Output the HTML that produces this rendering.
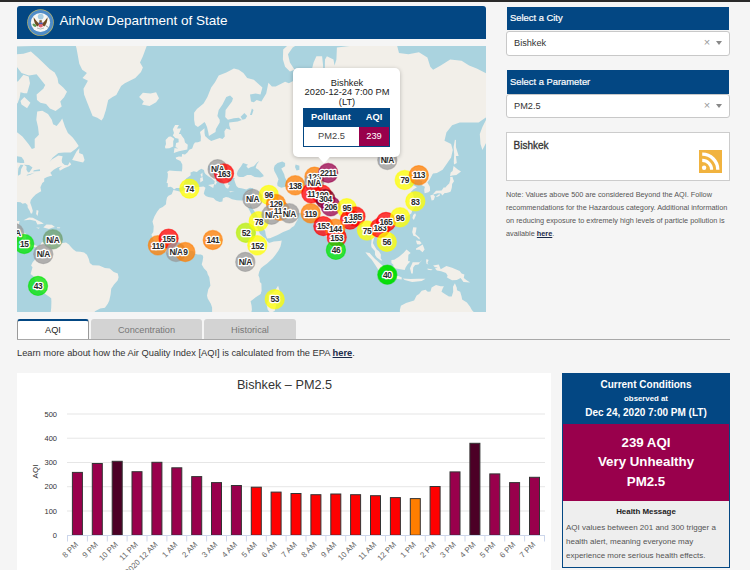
<!DOCTYPE html>
<html><head><meta charset="utf-8">
<style>
*{box-sizing:border-box;margin:0;padding:0}
html,body{width:750px;height:570px;overflow:hidden;background:#f5f5f5;font-family:"Liberation Sans",sans-serif;position:relative}
.abs{position:absolute}
#topbar{left:0;top:0;width:750px;height:2px;background:#2a2a2a}
#hdr{left:17px;top:6px;width:469px;height:33px;background:#034783;border-radius:3px 3px 0 0}
#hdr .t{position:absolute;left:42.5px;top:6.5px;font-size:13.5px;color:#fff;white-space:nowrap}
#map{left:17px;top:46px;width:469px;height:266px;background:#aad3df;overflow:hidden}
.sh{background:#034783;color:#fff;font-size:9.4px;-webkit-text-stroke:0.2px #fff;padding:0 0 0 3px;white-space:nowrap}
.sel{background:#fff;border:1px solid #c8c8c8;border-radius:3px;font-size:9.2px;color:#333;white-space:nowrap}
.note{font-size:7.3px;color:#555;line-height:13.1px;white-space:nowrap}
.tl{top:325px;font-size:9.2px;color:#777;text-align:center;white-space:nowrap}
.tabx{top:319px;height:21px;border:1px solid #c6c6c6;border-bottom:none;background:#d3d3d3;color:#777;font-size:9.5px;text-align:center;line-height:20px;border-radius:3px 3px 0 0}
.ml{font-family:"Liberation Sans",sans-serif;font-size:8.4px;letter-spacing:-0.4px;font-weight:bold;fill:#2a2a2a;text-anchor:middle;paint-order:stroke;stroke:#fff;stroke-width:2.6px;stroke-linejoin:round}
</style></head><body>
<div id="topbar" class="abs"></div>
<div id="hdr" class="abs">
  <svg class="abs" style="left:10px;top:3px" width="27" height="27" viewBox="0 0 27 27">
    <circle cx="13.5" cy="13.5" r="13.3" fill="#b9b56e"/>
    <circle cx="13.5" cy="13.5" r="12.6" fill="#4f8cc8"/>
    <circle cx="13.5" cy="13.5" r="9.6" fill="#f7f7f4"/>
    <circle cx="13.7" cy="7.6" r="2.9" fill="#a8cde2"/>
    <path d="M12.8 15.5 Q9.5 12.5 6.6 8.2 Q6.8 14 10.2 17.6 Z" fill="#6e4b22"/>
    <path d="M14.4 15.5 Q17.7 12.5 20.6 8.2 Q20.4 14 17.2 17.6 Z" fill="#6e4b22"/>
    <rect x="12.4" y="11.2" width="2.4" height="2.6" fill="#7a5a30"/>
    <path d="M11.8 13.6 H15.6 V17.2 Q13.7 19.6 11.8 17.2 Z" fill="#e06070"/>
    <rect x="11.8" y="13.6" width="3.8" height="1.5" fill="#3d5db0"/>
    <ellipse cx="7.4" cy="16.2" rx="2.2" ry="1.3" fill="#5d9a55" transform="rotate(35 7.4 16.2)"/>
    <path d="M18.5 16.5 L21.5 18.5" stroke="#9a9a9a" stroke-width="1"/>
    <path d="M10 19 Q13.5 21 17 19" stroke="#aaa" stroke-width="0.8" fill="none"/>
  </svg>
  <div class="t">AirNow Department of State</div>
</div>
<div id="map" class="abs"></div>
<!--MAP-->
<svg class="abs" style="left:17px;top:46px" width="469" height="266" viewBox="17 46 469 266">
<rect x="17" y="46" width="469" height="266" fill="#aad3df"/>
<defs><filter id="bl" x="0" y="0" width="1" height="1"><feGaussianBlur stdDeviation="0.4"/></filter></defs><g filter="url(#bl)"><rect x="17" y="46" width="469" height="266" fill="#aad3df"/><g fill="#f2efe9">
<polygon points="-5.1,224.2 -5.1,130.6 9.1,129.9 15.8,131.3 22.4,136.4 28.5,143.9 31.9,149.1 34.7,147.9 34.7,139.1 38.9,134.8 38.0,127.1 36.3,119.7 37.2,111.5 42.3,110.7 48.0,113.9 51.8,119.7 53.1,124.2 56.6,126.0 60.3,121.6 62.2,118.6 65.1,127.1 67.9,133.1 72.7,137.4 75.9,141.7 78.7,146.1 75.9,148.8 70.8,152.4 64.1,152.4 58.4,153.0 52.8,157.4 49.5,161.9 51.8,159.4 58.4,155.4 62.6,156.2 61.7,160.2 62.1,162.7 64.7,164.9 67.9,165.2 69.8,161.9 71.2,164.4 68.9,166.3 64.1,168.2 59.8,170.8 59.0,168.2 62.2,166.0 57.5,167.6 53.7,169.8 50.5,172.4 50.7,173.4 51.8,174.9 52.0,175.7 49.5,176.2 47.1,177.0 44.2,178.5 44.2,181.5 42.3,182.9 41.4,184.9 40.4,187.2 41.2,191.2 38.9,192.6 35.7,194.5 33.0,197.2 30.8,199.9 30.2,202.8 31.7,206.9 32.8,210.7 32.1,213.5 30.8,213.5 29.4,210.3 27.7,207.5 27.5,204.9 25.3,203.0 22.6,203.8 20.5,202.3 17.7,201.9 14.8,202.8 15.4,205.2 12.9,204.9 8.2,203.8 4.4,204.7 0.0,208.0 -0.4,212.8 -0.7,220.1 0.6,223.2 2.5,226.2 5.3,227.8 10.1,227.0 12.4,225.6 13.1,222.1 16.7,221.1 19.6,221.1 18.6,225.2 18.0,227.8 17.1,231.7 21.5,232.3 25.3,233.1 26.6,235.1 25.8,240.9 27.1,243.8 30.0,245.9 33.8,244.6 37.8,246.3 40.4,245.0 41.4,242.7 43.8,241.5 47.1,240.4 48.4,239.2 49.5,240.4 48.4,241.9 49.9,244.8 50.9,241.9 51.8,240.9 55.0,242.7 58.4,242.7 62.8,243.1 66.0,242.5 68.9,244.4 70.8,246.7 73.1,249.2 76.1,251.5 80.3,251.7 84.1,252.4 86.9,254.7 88.8,259.1 89.8,262.9 92.6,265.2 99.2,265.6 104.9,268.0 109.7,268.6 113.8,272.0 117.8,273.4 118.6,277.2 117.6,280.6 114.0,284.5 111.2,288.8 110.6,294.6 109.3,300.6 107.8,303.7 104.9,307.8 100.2,308.4 95.4,311.1 92.4,314.0 50.5,314.0 51.2,307.8 51.4,301.6 51.2,298.2 49.2,296.8 44.2,293.3 39.9,289.3 38.2,285.8 35.7,281.0 33.4,276.2 30.6,273.9 31.9,269.5 32.5,267.3 31.1,265.4 32.8,262.0 34.7,260.1 35.7,258.2 38.0,255.3 38.0,250.5 36.3,247.7 33.8,246.7 31.9,248.6 29.6,247.3 26.2,246.7 22.4,243.8 21.5,240.9 18.6,238.0 14.8,237.0 11.0,236.1 7.2,232.5 4.4,231.7 0.6,232.5 -5.1,230.2"/>
<polygon points="-5.1,127.1 5.3,123.5 8.2,115.9 12.0,108.6 17.7,103.1 19.6,97.8 20.5,92.2 24.3,93.2 27.1,93.2 30.0,83.3 28.7,76.5 23.4,74.8 17.7,81.8 13.9,78.1 10.1,72.6 4.4,65.6 -5.1,68.6"/>
<polygon points="16.7,54.3 23.4,53.7 30.9,51.6 38.5,58.2 44.2,63.8 49.9,69.2 54.7,72.6 57.5,78.1 58.4,83.3 63.2,87.4 67.0,91.7 64.1,97.3 60.3,101.4 61.7,106.5 55.6,111.1 49.9,108.6 46.1,104.0 40.4,102.7 37.0,100.0 36.6,94.6 43.3,88.8 45.2,84.9 40.4,79.1 36.6,74.3 29.0,75.4 21.5,73.1 15.8,65.6"/>
<polygon points="4.4,46.8 32.8,46.1 32.8,34.9 4.4,34.9"/>
<polygon points="20.5,100.9 24.3,96.9 30.4,102.7 27.1,108.2 21.5,104.4"/>
<polygon points="72.1,160.0 76.5,151.6 79.3,148.2 79.1,153.0 82.9,154.5 84.6,160.0 83.1,162.5 78.6,161.6 72.3,160.0"/>
<polygon points="46.1,18.0 59.4,34.9 73.6,38.8 76.5,48.2 79.3,63.8 82.2,69.7 86.9,73.1 82.5,78.1 87.9,80.7 83.5,88.8 84.1,94.6 87.3,102.7 89.8,109.1 92.6,115.9 97.3,117.8 101.5,120.5 103.4,117.8 105.9,109.9 108.2,100.0 112.5,96.9 116.3,95.0 121.1,85.9 124.8,83.3 135.3,78.1 141.0,72.0 142.9,67.4 140.0,62.6 142.9,56.3 146.7,46.1 150.5,30.9 150.5,-1.9 46.1,-1.9"/>
<polygon points="139.1,96.9 142.9,92.7 150.5,93.6 156.1,92.2 159.0,98.2 156.1,102.3 149.5,106.1 141.9,104.4 143.8,101.4"/>
<polygon points="23.5,220.3 29.0,217.6 32.8,217.8 38.0,220.5 41.2,222.1 43.8,223.8 37.4,224.4 35.7,221.1 30.0,219.7 25.3,220.3"/>
<polygon points="43.5,227.2 46.5,224.4 51.8,224.8 55.0,227.0 52.0,227.8 49.0,229.0 43.5,227.6"/>
<polygon points="36.1,227.4 39.9,227.8 38.5,228.8"/>
<polygon points="57.1,227.2 60.2,227.4 60.0,228.2 57.1,228.2"/>
<polygon points="36.6,210.1 38.5,210.7 37.6,216.0 36.1,213.9"/>
<polygon points="173.8,153.0 178.9,151.3 187.3,149.5 187.8,144.8 185.0,142.6 184.2,139.1 181.8,135.8 180.8,134.1 178.9,134.1 181.2,128.5 177.0,128.5 178.9,124.9 175.1,124.9 172.8,129.2 174.0,133.1 172.8,135.4 175.3,138.1 178.5,138.8 178.7,142.3 176.1,142.9 175.5,147.0 178.3,148.5 175.5,148.2 174.5,147.9"/>
<polygon points="165.6,148.5 169.4,148.2 173.2,146.4 173.2,141.3 174.2,138.8 170.9,136.4 168.7,136.8 165.6,140.1 166.0,143.9 164.9,147.0"/>
<polygon points="174.0,189.6 172.6,187.7 170.6,186.8 167.7,187.2 167.9,183.2 166.6,182.9 167.7,177.5 167.9,173.7 167.1,171.9 169.4,170.5 175.1,171.1 180.8,171.3 181.8,171.6 182.3,168.2 182.3,164.4 180.4,161.1 176.1,159.1 175.7,157.4 178.9,156.5 181.8,156.8 182.1,153.9 185.0,154.5 187.4,152.4 189.3,149.8 192.2,148.5 193.7,144.2 195.0,142.6 197.9,142.3 200.7,141.3 200.9,136.4 200.0,132.0 204.5,128.2 204.5,133.1 205.1,136.1 208.3,139.1 211.2,141.0 219.7,138.1 222.5,139.1 224.8,136.4 224.4,131.3 226.3,128.5 230.7,129.9 229.2,125.3 229.2,122.4 237.7,121.6 241.9,120.1 238.7,117.8 233.9,118.2 227.9,119.7 225.2,117.1 225.6,109.9 232.0,101.4 233.0,98.2 230.1,95.5 226.3,96.9 222.5,104.4 218.7,109.9 217.4,115.9 219.7,119.7 219.7,122.4 215.9,128.9 215.5,132.0 212.1,134.1 208.9,136.1 208.3,132.4 207.0,127.1 205.5,123.5 204.5,122.0 201.7,124.2 197.9,127.1 195.0,124.9 194.1,119.7 194.1,112.7 196.9,109.1 203.6,103.6 207.4,96.9 211.2,87.4 215.0,82.3 218.7,75.4 226.3,72.6 233.9,68.6 238.7,69.7 243.4,73.1 247.2,78.1 253.8,79.7 262.4,87.4 260.5,94.6 255.7,93.6 250.0,94.6 251.0,101.4 253.8,102.3 256.7,100.0 261.4,101.4 266.2,93.6 268.4,82.8 271.9,86.4 275.7,86.4 285.1,81.8 288.9,83.3 294.6,80.2 298.4,80.7 299.4,75.4 309.8,77.0 314.5,83.3 311.3,71.5 313.6,62.6 316.4,56.3 322.1,56.3 323.1,65.6 323.5,74.3 324.6,74.3 325.0,59.5 326.9,56.3 333.5,59.5 334.5,65.6 336.4,59.5 336.9,47.5 349.6,46.1 359.1,38.8 374.3,26.8 383.8,22.5 393.3,30.9 399.0,53.0 408.4,54.3 418.9,52.3 427.4,57.6 430.3,66.8 433.1,69.7 440.7,65.6 450.2,59.5 461.6,60.7 469.1,65.6 476.7,68.6 488.1,74.3 497.6,75.4 497.6,119.7 493.8,130.6 488.1,139.1 482.4,150.1 480.5,143.9 479.8,134.1 482.4,127.1 488.1,115.9 478.6,122.4 471.0,122.4 459.7,122.4 452.1,125.3 446.4,132.4 444.5,140.7 451.1,143.9 452.8,150.1 451.1,157.4 447.3,163.0 442.6,169.8 436.9,172.9 433.1,173.4 432.5,174.2 430.6,178.0 427.4,182.4 429.9,186.8 430.1,190.8 428.4,192.2 424.6,193.3 424.2,189.6 424.9,186.8 421.7,185.3 422.3,181.2 420.2,180.2 416.0,178.7 414.1,182.4 410.3,181.7 408.4,181.9 407.9,183.6 410.2,186.1 410.7,187.0 413.8,185.3 417.0,187.2 413.2,189.6 410.9,191.9 412.8,193.6 413.9,197.4 415.8,200.5 415.8,203.2 415.1,206.5 412.2,210.7 411.3,213.5 408.4,215.4 405.6,218.0 401.2,219.5 399.9,219.7 395.2,221.1 393.3,222.1 392.9,221.1 389.5,220.9 387.0,223.2 385.3,226.2 387.0,229.6 391.0,233.5 391.9,238.0 391.8,240.5 388.5,242.9 386.6,244.8 383.8,246.5 383.4,243.4 380.9,242.7 379.0,239.6 376.0,237.0 374.3,237.2 372.8,242.9 374.9,246.7 376.8,249.8 379.0,251.3 380.9,254.4 380.7,258.2 382.3,260.4 380.9,260.4 376.8,257.6 375.1,254.9 374.9,250.9 371.5,247.3 371.1,244.8 371.6,240.0 369.9,231.2 369.0,230.4 365.8,232.5 363.5,232.1 363.3,227.2 362.0,225.2 359.7,222.7 358.7,219.5 356.3,218.7 352.9,220.7 349.6,221.3 349.3,223.6 345.8,225.4 340.7,230.2 336.7,233.1 336.9,237.4 336.2,243.3 333.7,245.4 331.6,247.5 329.7,245.9 328.2,241.3 326.5,238.2 324.8,232.9 322.7,226.2 322.9,223.2 322.3,221.3 318.3,222.5 315.5,219.5 318.0,218.2 314.5,216.8 311.3,214.3 306.0,213.3 301.3,213.5 294.6,212.4 293.3,209.7 291.4,209.2 288.4,210.7 284.2,208.4 281.0,205.4 279.4,202.8 276.6,203.2 275.7,204.7 277.6,208.2 279.8,211.8 281.0,214.3 282.5,215.6 287.0,215.6 289.9,213.3 291.4,211.4 291.6,214.3 293.1,216.2 295.8,216.8 298.0,219.1 295.6,223.2 294.1,226.0 292.0,227.2 289.5,229.6 283.2,232.1 277.6,234.9 270.0,238.2 267.1,238.6 265.8,235.1 265.2,231.2 262.4,226.2 259.0,221.1 257.6,216.2 255.4,212.8 251.9,207.5 250.6,204.3 249.7,207.7 248.1,206.9 246.4,203.4 249.7,200.3 251.0,196.5 252.5,191.9 253.3,188.2 250.0,187.7 246.3,189.4 242.5,188.4 238.3,187.7 236.4,186.1 234.9,181.9 234.1,179.2 234.9,178.0 231.1,177.7 229.2,179.2 227.5,179.5 228.2,182.4 227.9,184.4 229.7,185.3 228.2,188.4 227.3,188.4 225.8,187.5 224.6,184.9 222.9,181.2 221.4,178.7 221.6,175.5 219.7,173.7 215.9,171.1 213.4,169.0 210.6,166.8 210.4,165.2 207.9,166.3 208.1,169.0 210.4,171.1 211.7,173.9 215.0,176.2 218.4,177.7 219.7,179.7 216.8,178.7 215.9,181.0 217.0,182.4 215.1,185.1 214.2,184.1 214.8,181.2 212.9,179.5 211.2,178.0 208.3,176.2 205.5,173.9 204.5,172.4 203.9,170.0 201.3,168.7 198.8,170.3 196.9,172.1 193.7,171.3 190.5,172.4 190.7,175.2 188.4,177.0 186.1,178.5 184.6,181.2 184.0,183.6 183.1,185.8 180.4,188.0 176.3,188.0"/>
<polygon points="289.9,71.5 294.6,69.7 289.9,62.6 288.0,54.3 292.7,47.5 298.4,44.0 290.8,42.5 283.2,49.6 282.9,59.5 285.1,66.8"/>
<polygon points="336.0,244.2 338.6,246.7 340.0,249.0 338.8,251.1 336.5,251.5 335.8,248.6"/>
<polygon points="415.1,213.3 416.0,214.9 413.8,220.1 412.4,218.0 413.2,214.9"/>
<polygon points="390.6,225.8 394.2,224.0 395.2,225.0 394.2,227.2 392.3,227.8 390.6,227.2"/>
<polygon points="432.9,194.2 436.0,190.8 441.6,190.5 443.9,187.2 445.1,187.7 447.3,185.3 449.2,183.6 450.2,180.0 450.2,177.0 452.5,176.7 453.0,178.7 454.0,181.2 452.1,184.1 451.9,187.2 451.3,189.6 450.7,191.5 449.8,191.9 448.3,192.6 446.4,192.9 444.5,192.9 444.3,193.6 442.2,195.4 441.1,193.6 437.8,193.3 436.0,193.8 433.1,194.5"/>
<polygon points="430.3,195.4 433.1,194.5 435.0,196.5 433.7,200.1 431.6,200.5 430.8,197.2"/>
<polygon points="436.0,196.5 439.7,193.8 439.7,195.8 436.9,197.0"/>
<polygon points="450.2,176.2 452.1,175.5 456.4,174.9 461.0,171.6 457.8,169.5 453.6,166.0 452.6,171.1 450.7,172.4 450.2,174.9"/>
<polygon points="454.0,164.4 456.8,163.0 455.9,156.0 458.7,156.0 455.9,147.0 455.9,140.1 454.9,139.7 453.6,147.0 454.2,154.5 453.8,161.6"/>
<polygon points="413.2,227.2 416.6,227.4 416.0,231.2 415.3,234.1 419.8,238.0 419.4,239.4 416.0,236.5 413.4,235.7 412.2,232.1 412.8,229.2"/>
<polygon points="416.0,248.6 422.7,244.4 424.6,249.6 422.5,252.3 419.6,249.8 416.0,249.8"/>
<polygon points="416.0,240.4 419.8,240.9 421.7,243.3 419.8,244.6 417.0,244.2"/>
<polygon points="391.4,260.1 394.2,259.7 399.0,256.8 403.7,252.8 406.5,249.6 410.7,253.0 408.4,254.7 408.1,261.0 410.3,261.4 407.5,264.4 405.6,267.6 404.7,270.1 401.8,269.5 396.1,268.6 393.6,268.4 393.3,264.8 391.4,262.9"/>
<polygon points="365.4,252.3 369.6,253.0 374.3,258.2 381.3,264.6 385.7,268.6 385.3,273.9 382.8,274.1 378.7,270.5 375.1,264.8 371.8,259.7 368.2,255.9"/>
<polygon points="384.2,275.8 386.6,274.3 390.0,274.7 394.2,276.0 398.4,276.0 401.8,277.6 401.6,279.5 395.2,278.5 389.5,277.7 384.7,276.2"/>
<polygon points="411.3,273.4 412.8,273.4 413.2,267.6 415.1,265.0 418.5,264.6 421.7,260.1 420.8,262.0 412.6,262.3 412.1,263.8 410.0,268.2"/>
<polygon points="402.8,278.5 410.3,279.1 417.9,278.7 425.5,278.7 421.7,281.0 412.2,282.0 404.7,279.9"/>
<polygon points="433.1,265.4 438.8,264.6 440.7,269.2 446.4,265.9 452.1,267.8 459.7,270.9 461.6,273.4 464.4,274.5 463.8,278.1 466.3,280.0 470.1,282.5 463.5,282.0 460.6,278.1 456.8,280.0 452.1,280.2 448.3,278.3 446.8,277.2 447.7,275.8 446.0,273.0 441.1,271.3 436.9,270.5 435.0,268.4 437.8,267.3 435.0,267.3"/>
<polygon points="426.5,259.1 428.6,260.1 427.4,262.9 428.4,264.4 426.5,263.8 426.1,261.0"/>
<polygon points="427.4,268.6 432.7,269.5 431.2,270.3 427.8,269.7"/>
<polygon points="399.9,309.8 400.9,305.7 406.0,302.9 414.1,300.6 416.6,295.6 419.1,294.1 421.7,290.7 425.5,289.7 427.8,291.7 430.5,291.5 431.6,287.4 436.0,284.9 440.7,286.2 443.9,286.2 442.6,288.8 441.5,291.7 444.5,293.7 448.9,296.6 451.7,296.4 453.2,291.7 453.0,286.8 454.9,283.3 456.8,287.8 457.0,290.3 460.2,291.7 461.6,296.6 462.1,299.6 466.9,302.6 470.1,306.7 472.0,310.2 474.8,313.0 475.2,322.6 399.9,322.6"/>
<polygon points="173.4,190.1 180.8,191.7 186.5,188.4 190.3,187.7 196.9,187.2 203.6,186.5 205.5,187.7 204.5,190.8 203.8,193.8 205.7,196.1 208.3,197.0 213.4,198.1 215.9,200.5 219.7,202.1 222.4,201.4 222.9,198.3 226.0,197.0 228.6,197.6 232.0,199.2 236.8,200.3 241.3,200.5 245.9,200.3 246.4,203.4 248.1,207.5 250.6,212.8 252.3,216.2 254.6,220.1 255.2,225.0 257.6,228.2 259.9,233.7 263.3,236.9 266.0,238.8 266.7,240.5 269.0,243.1 273.8,241.5 279.4,240.9 281.7,240.4 281.3,243.1 280.4,246.7 278.5,250.5 275.7,254.4 272.8,258.2 267.1,263.5 263.3,266.3 260.9,268.2 259.2,271.8 258.4,275.3 259.5,278.1 259.9,282.0 261.4,283.5 261.6,290.7 260.7,294.1 255.7,297.2 252.9,299.6 250.6,301.2 251.6,305.7 251.9,309.8 251.0,314.0 212.1,314.0 212.1,307.6 210.8,303.7 207.7,298.6 207.0,295.6 208.3,289.3 210.4,285.8 209.8,281.0 209.3,277.2 207.7,274.3 207.0,271.4 203.9,268.2 201.7,264.4 202.6,261.0 203.2,257.2 202.8,255.5 200.9,254.4 197.9,254.5 195.0,253.8 193.1,250.9 189.9,250.7 186.5,251.5 181.4,253.4 178.0,253.2 174.7,253.2 170.2,254.5 167.1,252.8 163.4,250.2 160.9,248.6 159.4,246.5 158.4,244.4 156.5,242.3 154.8,240.9 152.9,239.2 152.5,236.9 151.4,234.7 153.3,232.1 153.7,226.2 152.5,221.5 154.4,216.6 157.1,211.8 159.6,208.6 162.8,207.1 166.0,204.3 166.2,201.2 167.0,197.6 168.5,195.8 171.7,194.2"/>
<polygon points="278.1,285.8 280.2,292.7 278.9,295.6 276.8,302.6 274.7,310.9 270.3,313.0 267.7,309.8 266.7,304.7 268.6,299.6 268.4,294.6 272.4,292.7 274.9,290.7 277.4,286.8"/>
<polygon points="208.1,185.1 214.2,184.1 213.2,188.0"/>
<polygon points="200.3,182.4 203.2,180.5 202.6,177.0 200.2,178.0"/>
<polygon points="200.9,176.5 202.6,176.5 202.4,172.4 200.9,174.2"/>
<polygon points="229.2,191.2 234.5,191.5 230.1,192.2"/>
<polygon points="245.9,192.9 250.2,190.3 248.7,192.4"/>
</g><g fill="#aad3df">
<polygon points="236.8,173.7 237.7,171.1 239.0,169.0 241.1,166.3 243.0,163.0 245.3,163.8 248.1,164.7 246.3,166.0 248.1,168.4 251.0,167.1 253.8,166.3 257.1,162.5 259.2,161.1 256.7,164.4 255.7,167.9 258.6,169.8 263.3,174.9 263.7,176.2 260.5,177.5 254.8,177.0 251.0,174.9 247.2,174.9 243.4,177.0 239.6,177.0 237.7,176.2"/>
<polygon points="273.8,168.2 274.7,165.5 277.6,163.0 282.3,161.6 285.1,163.0 285.1,166.3 281.3,168.4 284.2,174.2 285.0,177.5 287.0,181.2 286.7,186.5 281.3,187.7 277.6,186.1 277.2,183.4 278.5,179.2 276.6,175.2 274.3,171.1"/>
<polygon points="295.6,164.4 299.4,165.7 299.4,169.8 296.5,170.5 295.0,167.1"/>
<polygon points="381.3,148.5 382.8,147.6 386.6,143.9 391.4,135.1 392.5,135.8 389.5,143.9 383.8,148.5"/>
<polygon points="9.9,162.5 13.9,158.8 17.1,156.2 21.5,157.1 23.9,160.2 24.3,163.0 20.5,163.0 15.8,162.2"/>
<polygon points="18.0,175.7 20.5,174.2 21.1,169.2 23.4,164.9 20.5,164.7 18.4,168.2 18.0,172.4"/>
<polygon points="23.9,164.7 29.0,164.9 32.5,167.6 29.6,171.9 28.1,172.4 26.4,169.8 26.6,166.6"/>
<polygon points="26.6,175.7 30.9,174.4 34.9,172.6 31.9,173.4 27.0,174.7"/>
<polygon points="33.2,171.6 40.0,171.1 39.9,169.2 33.8,170.3"/>
<polygon points="240.6,116.7 244.4,113.1 247.2,115.9 245.3,119.0 242.5,119.7"/>
<polygon points="250.0,115.1 251.9,108.6 253.5,109.9 251.9,115.1"/>
<polygon points="244.9,263.5 249.1,263.5 248.7,267.6 244.9,267.3"/>
</g></g>
<circle cx="14" cy="233" r="9.6" fill="#999999" fill-opacity="0.75" stroke="#999999" stroke-opacity="0.55" stroke-width="1.2"/>
<circle cx="24.2" cy="244" r="9.6" fill="#00e400" fill-opacity="0.75" stroke="#00e400" stroke-opacity="0.55" stroke-width="1.2"/>
<circle cx="52.8" cy="239.3" r="9.6" fill="#6f9f6f" fill-opacity="0.75" stroke="#6f9f6f" stroke-opacity="0.55" stroke-width="1.2"/>
<circle cx="43.3" cy="254.1" r="9.6" fill="#999999" fill-opacity="0.75" stroke="#999999" stroke-opacity="0.55" stroke-width="1.2"/>
<circle cx="38" cy="285.9" r="9.6" fill="#00e400" fill-opacity="0.75" stroke="#00e400" stroke-opacity="0.55" stroke-width="1.2"/>
<circle cx="217.6" cy="169.2" r="9.6" fill="#999999" fill-opacity="0.75" stroke="#999999" stroke-opacity="0.55" stroke-width="1.2"/>
<circle cx="224" cy="173.5" r="9.6" fill="#ff0000" fill-opacity="0.75" stroke="#ff0000" stroke-opacity="0.55" stroke-width="1.2"/>
<circle cx="189.4" cy="188.6" r="9.6" fill="#ffff00" fill-opacity="0.75" stroke="#ffff00" stroke-opacity="0.55" stroke-width="1.2"/>
<circle cx="157.9" cy="245.3" r="9.6" fill="#ff7e00" fill-opacity="0.75" stroke="#ff7e00" stroke-opacity="0.55" stroke-width="1.2"/>
<circle cx="168.6" cy="238.6" r="9.6" fill="#ff0000" fill-opacity="0.75" stroke="#ff0000" stroke-opacity="0.55" stroke-width="1.2"/>
<circle cx="176" cy="252" r="9.6" fill="#999999" fill-opacity="0.75" stroke="#999999" stroke-opacity="0.55" stroke-width="1.2"/>
<circle cx="185.3" cy="252" r="9.6" fill="#ff7e00" fill-opacity="0.75" stroke="#ff7e00" stroke-opacity="0.55" stroke-width="1.2"/>
<circle cx="212.8" cy="240" r="9.6" fill="#ff7e00" fill-opacity="0.75" stroke="#ff7e00" stroke-opacity="0.55" stroke-width="1.2"/>
<circle cx="245.9" cy="232.8" r="9.6" fill="#b8f000" fill-opacity="0.75" stroke="#b8f000" stroke-opacity="0.55" stroke-width="1.2"/>
<circle cx="257.3" cy="245.3" r="9.6" fill="#ffff00" fill-opacity="0.75" stroke="#ffff00" stroke-opacity="0.55" stroke-width="1.2"/>
<circle cx="245.3" cy="261.9" r="9.6" fill="#999999" fill-opacity="0.75" stroke="#999999" stroke-opacity="0.55" stroke-width="1.2"/>
<circle cx="274.7" cy="299.2" r="9.6" fill="#ffff00" fill-opacity="0.75" stroke="#ffff00" stroke-opacity="0.55" stroke-width="1.2"/>
<circle cx="258.7" cy="221.3" r="9.6" fill="#ffff00" fill-opacity="0.75" stroke="#ffff00" stroke-opacity="0.55" stroke-width="1.2"/>
<circle cx="252.5" cy="198.9" r="9.6" fill="#999999" fill-opacity="0.75" stroke="#999999" stroke-opacity="0.55" stroke-width="1.2"/>
<circle cx="268.8" cy="194.9" r="9.6" fill="#ffff00" fill-opacity="0.75" stroke="#ffff00" stroke-opacity="0.55" stroke-width="1.2"/>
<circle cx="276" cy="204" r="9.6" fill="#ff7e00" fill-opacity="0.75" stroke="#ff7e00" stroke-opacity="0.55" stroke-width="1.2"/>
<circle cx="271.5" cy="214.7" r="9.6" fill="#999999" fill-opacity="0.75" stroke="#999999" stroke-opacity="0.55" stroke-width="1.2"/>
<circle cx="280" cy="210.7" r="9.6" fill="#ff7e00" fill-opacity="0.75" stroke="#ff7e00" stroke-opacity="0.55" stroke-width="1.2"/>
<circle cx="289.3" cy="213.3" r="9.6" fill="#999999" fill-opacity="0.75" stroke="#999999" stroke-opacity="0.55" stroke-width="1.2"/>
<circle cx="295.2" cy="185.3" r="9.6" fill="#ff7e00" fill-opacity="0.75" stroke="#ff7e00" stroke-opacity="0.55" stroke-width="1.2"/>
<circle cx="310.7" cy="213.3" r="9.6" fill="#ff7e00" fill-opacity="0.75" stroke="#ff7e00" stroke-opacity="0.55" stroke-width="1.2"/>
<circle cx="314.5" cy="176.7" r="9.6" fill="#ff7e00" fill-opacity="0.75" stroke="#ff7e00" stroke-opacity="0.55" stroke-width="1.2"/>
<circle cx="314.2" cy="182.6" r="9.6" fill="#999999" fill-opacity="0.75" stroke="#999999" stroke-opacity="0.55" stroke-width="1.2"/>
<circle cx="311.3" cy="193.3" r="9.6" fill="#ff0000" fill-opacity="0.75" stroke="#ff0000" stroke-opacity="0.55" stroke-width="1.2"/>
<circle cx="322" cy="194.7" r="9.6" fill="#ff0000" fill-opacity="0.75" stroke="#ff0000" stroke-opacity="0.55" stroke-width="1.2"/>
<circle cx="325.4" cy="199" r="9.6" fill="#7e0023" fill-opacity="0.75" stroke="#7e0023" stroke-opacity="0.55" stroke-width="1.2"/>
<circle cx="330.7" cy="206.3" r="9.6" fill="#99004c" fill-opacity="0.75" stroke="#99004c" stroke-opacity="0.55" stroke-width="1.2"/>
<circle cx="328.2" cy="173" r="9.6" fill="#99004c" fill-opacity="0.75" stroke="#99004c" stroke-opacity="0.55" stroke-width="1.2"/>
<circle cx="346.8" cy="208.2" r="9.6" fill="#ffff00" fill-opacity="0.75" stroke="#ffff00" stroke-opacity="0.55" stroke-width="1.2"/>
<circle cx="350" cy="219.6" r="9.6" fill="#ff0000" fill-opacity="0.75" stroke="#ff0000" stroke-opacity="0.55" stroke-width="1.2"/>
<circle cx="355.5" cy="216.5" r="9.6" fill="#ff0000" fill-opacity="0.75" stroke="#ff0000" stroke-opacity="0.55" stroke-width="1.2"/>
<circle cx="323.3" cy="226.1" r="9.6" fill="#ff0000" fill-opacity="0.75" stroke="#ff0000" stroke-opacity="0.55" stroke-width="1.2"/>
<circle cx="335.3" cy="228.8" r="9.6" fill="#ff7e00" fill-opacity="0.75" stroke="#ff7e00" stroke-opacity="0.55" stroke-width="1.2"/>
<circle cx="336.7" cy="237.3" r="9.6" fill="#ff0000" fill-opacity="0.75" stroke="#ff0000" stroke-opacity="0.55" stroke-width="1.2"/>
<circle cx="335.9" cy="249.9" r="9.6" fill="#00e400" fill-opacity="0.75" stroke="#00e400" stroke-opacity="0.55" stroke-width="1.2"/>
<circle cx="367" cy="230.5" r="9.6" fill="#ffff00" fill-opacity="0.75" stroke="#ffff00" stroke-opacity="0.55" stroke-width="1.2"/>
<circle cx="379.9" cy="228" r="9.6" fill="#ff0000" fill-opacity="0.75" stroke="#ff0000" stroke-opacity="0.55" stroke-width="1.2"/>
<circle cx="386" cy="221.9" r="9.6" fill="#ff0000" fill-opacity="0.75" stroke="#ff0000" stroke-opacity="0.55" stroke-width="1.2"/>
<circle cx="400.1" cy="217.3" r="9.6" fill="#ffff00" fill-opacity="0.75" stroke="#ffff00" stroke-opacity="0.55" stroke-width="1.2"/>
<circle cx="386.8" cy="241.9" r="9.6" fill="#ffff00" fill-opacity="0.75" stroke="#ffff00" stroke-opacity="0.55" stroke-width="1.2"/>
<circle cx="387.3" cy="274.7" r="9.6" fill="#00dd00" fill-opacity="0.95" stroke="#00dd00" stroke-opacity="0.55" stroke-width="1.2"/>
<circle cx="415.3" cy="201.3" r="9.6" fill="#ffff00" fill-opacity="0.75" stroke="#ffff00" stroke-opacity="0.55" stroke-width="1.2"/>
<circle cx="404.7" cy="180" r="9.6" fill="#ffff00" fill-opacity="0.75" stroke="#ffff00" stroke-opacity="0.55" stroke-width="1.2"/>
<circle cx="418.8" cy="175.2" r="9.6" fill="#ff7e00" fill-opacity="0.75" stroke="#ff7e00" stroke-opacity="0.55" stroke-width="1.2"/>
<circle cx="387.3" cy="160" r="9.6" fill="#999999" fill-opacity="0.75" stroke="#999999" stroke-opacity="0.55" stroke-width="1.2"/>
<text x="14" y="236.2" class="ml">N/A</text>
<text x="24.2" y="247.2" class="ml">15</text>
<text x="52.8" y="242.5" class="ml">N/A</text>
<text x="43.3" y="257.3" class="ml">N/A</text>
<text x="38" y="289.09999999999997" class="ml">43</text>
<text x="217.6" y="172.39999999999998" class="ml">N/A</text>
<text x="224" y="176.7" class="ml">163</text>
<text x="189.4" y="191.79999999999998" class="ml">74</text>
<text x="157.9" y="248.5" class="ml">119</text>
<text x="168.6" y="241.79999999999998" class="ml">155</text>
<text x="176" y="255.2" class="ml">N/A</text>
<text x="185.3" y="255.2" class="ml">9</text>
<text x="212.8" y="243.2" class="ml">141</text>
<text x="245.9" y="236.0" class="ml">52</text>
<text x="257.3" y="248.5" class="ml">152</text>
<text x="245.3" y="265.09999999999997" class="ml">N/A</text>
<text x="274.7" y="302.4" class="ml">53</text>
<text x="258.7" y="224.5" class="ml">78</text>
<text x="252.5" y="202.1" class="ml">N/A</text>
<text x="268.8" y="198.1" class="ml">96</text>
<text x="276" y="207.2" class="ml">129</text>
<text x="271.5" y="217.89999999999998" class="ml">N/A</text>
<text x="280" y="213.89999999999998" class="ml">114</text>
<text x="289.3" y="216.5" class="ml">N/A</text>
<text x="295.2" y="188.5" class="ml">138</text>
<text x="310.7" y="216.5" class="ml">119</text>
<text x="314.5" y="179.89999999999998" class="ml">123</text>
<text x="314.2" y="185.79999999999998" class="ml">N/A</text>
<text x="311.3" y="196.5" class="ml">11</text>
<text x="322" y="197.89999999999998" class="ml">199</text>
<text x="325.4" y="202.2" class="ml">304</text>
<text x="330.7" y="209.5" class="ml">206</text>
<text x="328.2" y="176.2" class="ml">2211</text>
<text x="346.8" y="211.39999999999998" class="ml">95</text>
<text x="350" y="222.79999999999998" class="ml">130</text>
<text x="355.5" y="219.7" class="ml">185</text>
<text x="323.3" y="229.29999999999998" class="ml">153</text>
<text x="335.3" y="232.0" class="ml">144</text>
<text x="336.7" y="240.5" class="ml">153</text>
<text x="335.9" y="253.1" class="ml">46</text>
<text x="367" y="233.7" class="ml">75</text>
<text x="379.9" y="231.2" class="ml">183</text>
<text x="386" y="225.1" class="ml">165</text>
<text x="400.1" y="220.5" class="ml">96</text>
<text x="386.8" y="245.1" class="ml">56</text>
<text x="387.3" y="277.9" class="ml">40</text>
<text x="415.3" y="204.5" class="ml">83</text>
<text x="404.7" y="183.2" class="ml">79</text>
<text x="418.8" y="178.39999999999998" class="ml">113</text>
<text x="387.3" y="163.2" class="ml">N/A</text>
</svg>
<!--/MAP-->
<!--POPUP-->
<div class="abs" style="left:292.5px;top:67.5px;width:107.5px;height:89.5px;background:#fff;border-radius:5px;box-shadow:0 1px 4px rgba(0,0,0,0.25)"></div>
<svg class="abs" style="left:312px;top:156px" width="26" height="10" viewBox="0 0 26 10"><path d="M5.5 0 L12.1 7.4 L18.7 0 Z" fill="#fff"/></svg>
<div class="abs" style="left:293px;top:67px;width:107px;font-size:9.3px;color:#222;text-align:center;line-height:9.7px">
  <div style="padding-top:11.5px;padding-left:1px">Bishkek<br>2020-12-24 7:00 PM<br>(LT)</div>
</div>
<div class="abs" style="left:303px;top:108px;width:87px;height:39px;background:#034783"></div>
<div class="abs" style="left:304px;top:126.5px;width:54.5px;height:19px;background:#fff"></div>
<div class="abs" style="left:359.2px;top:126.5px;width:29.8px;height:19px;background:#99004c"></div>
<div class="abs" style="left:303px;top:112px;width:56px;text-align:center;color:#fff;font-weight:bold;font-size:9.3px">Pollutant</div>
<div class="abs" style="left:359px;top:112px;width:30px;text-align:center;color:#fff;font-weight:bold;font-size:9.3px">AQI</div>
<div class="abs" style="left:303.5px;top:130.5px;width:56px;text-align:center;color:#444;font-size:9.3px">PM2.5</div>
<div class="abs" style="left:359px;top:130.5px;width:30px;text-align:center;color:#fff;font-size:9.3px">239</div>
<!--/POPUP-->

<!-- right column -->
<div class="abs sh" style="left:507px;top:7px;width:222.3px;height:23px;line-height:22px;">Select a City</div>
<div class="abs sel" style="left:506px;top:31px;width:224px;height:25px;line-height:22px;padding-left:7px">Bishkek</div>
<div class="abs sh" style="left:507px;top:70px;width:222.3px;height:24px;line-height:23px;">Select a Parameter</div>
<div class="abs sel" style="left:506px;top:94px;width:224px;height:24px;line-height:22px;padding-left:7px">PM2.5</div>
<div class="abs" style="left:703.7px;top:35.5px;font-size:11px;color:#999">×</div>
<div class="abs" style="left:716px;top:41px;width:0;height:0;border-left:3.5px solid transparent;border-right:3.5px solid transparent;border-top:4px solid #888"></div>
<div class="abs" style="left:703.7px;top:98.5px;font-size:11px;color:#999">×</div>
<div class="abs" style="left:716px;top:104px;width:0;height:0;border-left:3.5px solid transparent;border-right:3.5px solid transparent;border-top:4px solid #888"></div>

<div class="abs" style="left:506px;top:132px;width:224px;height:49px;background:#fff;border:1px solid #ccc"></div>
<div class="abs" style="left:513.5px;top:139.7px;font-size:10px;color:#333;-webkit-text-stroke:0.3px #333">Bishkek</div>
<svg class="abs" style="left:699px;top:150px" width="23" height="23" viewBox="0 0 23 23">
  <rect width="23" height="23" fill="#f1b33f"/>
  <circle cx="5.1" cy="17.8" r="2.2" fill="#fff"/>
  <path d="M3.2 10.4 A9.4 9.4 0 0 1 12.6 19.8" stroke="#fff" stroke-width="3.1" fill="none"/>
  <path d="M3.2 4.2 A15.6 15.6 0 0 1 18.8 19.8" stroke="#fff" stroke-width="3.3" fill="none"/>
</svg>
<div class="abs note" style="left:506px;top:188.2px">Note: Values above 500 are considered Beyond the AQI. Follow<br>recommendations for the Hazardous category. Additional information<br>on reducing exposure to extremely high levels of particle pollution is<br>available <b style="color:#1a2a4a;text-decoration:underline">here</b>.</div>

<!-- tabs -->
<div class="abs" style="left:17px;top:319px;width:72px;height:21px;background:#fff;border:1px solid #9a9a9a;border-top:2px solid #034783;border-bottom:none;border-radius:3px 3px 0 0"></div>
<div class="abs" style="left:91px;top:319px;width:111px;height:20px;background:#d3d3d3;border-radius:3px 3px 0 0"></div>
<div class="abs" style="left:204px;top:319px;width:92px;height:20px;background:#d3d3d3;border-radius:3px 3px 0 0"></div>
<div class="abs" style="left:17px;top:339px;width:713px;height:1px;background:#a8a8a8"></div>
<div class="abs tl" style="left:17px;width:72px;color:#222">AQI</div>
<div class="abs tl" style="left:91px;width:111px">Concentration</div>
<div class="abs tl" style="left:204px;width:92px">Historical</div>
<div class="abs" style="left:17px;top:348px;font-size:9.3px;color:#333;white-space:nowrap">Learn more about how the Air Quality Index [AQI] is calculated from the EPA <b style="color:#1a2a4a;text-decoration:underline">here</b>.</div>

<!-- chart -->
<div id="chart" class="abs" style="left:17px;top:373px;width:534px;height:197px;background:#fff"></div>
<!--CHART-->
<svg class="abs" style="left:17px;top:373px" width="534" height="197" viewBox="17 373 534 197">
<text x="284.5" y="388.5" font-size="12.7" fill="#333" text-anchor="middle">Bishkek – PM2.5</text>
<text x="57" y="537.8" font-size="7.5" fill="#333" text-anchor="end">0</text>
<rect x="67" y="510.5" width="478" height="1" fill="#e6e6e6"/>
<text x="57" y="513.6" font-size="7.5" fill="#333" text-anchor="end">100</text>
<rect x="67" y="486.2" width="478" height="1" fill="#e6e6e6"/>
<text x="57" y="489.3" font-size="7.5" fill="#333" text-anchor="end">200</text>
<rect x="67" y="462.0" width="478" height="1" fill="#e6e6e6"/>
<text x="57" y="465.1" font-size="7.5" fill="#333" text-anchor="end">300</text>
<rect x="67" y="437.7" width="478" height="1" fill="#e6e6e6"/>
<text x="57" y="440.8" font-size="7.5" fill="#333" text-anchor="end">400</text>
<rect x="67" y="413.5" width="478" height="1" fill="#e6e6e6"/>
<text x="57" y="416.6" font-size="7.5" fill="#333" text-anchor="end">500</text>
<text transform="translate(37.5,471.5) rotate(-90)" font-size="8" fill="#333" text-anchor="middle">AQI</text>
<rect x="72.4" y="472.4" width="10" height="62.8" fill="#99004c" stroke="#333" stroke-width="1"/>
<rect x="92.3" y="463.5" width="10" height="71.7" fill="#99004c" stroke="#333" stroke-width="1"/>
<rect x="112.2" y="461.3" width="10" height="73.9" fill="#4c0026" stroke="#333" stroke-width="1"/>
<rect x="132.0" y="471.7" width="10" height="63.5" fill="#99004c" stroke="#333" stroke-width="1"/>
<rect x="151.9" y="462.3" width="10" height="72.9" fill="#99004c" stroke="#333" stroke-width="1"/>
<rect x="171.8" y="467.8" width="10" height="67.4" fill="#99004c" stroke="#333" stroke-width="1"/>
<rect x="191.7" y="476.6" width="10" height="58.6" fill="#99004c" stroke="#333" stroke-width="1"/>
<rect x="211.5" y="482.6" width="10" height="52.6" fill="#99004c" stroke="#333" stroke-width="1"/>
<rect x="231.4" y="485.5" width="10" height="49.7" fill="#99004c" stroke="#333" stroke-width="1"/>
<rect x="251.3" y="487.2" width="10" height="48.0" fill="#ff0000" stroke="#333" stroke-width="1"/>
<rect x="271.1" y="492.1" width="10" height="43.1" fill="#ff0000" stroke="#333" stroke-width="1"/>
<rect x="291.0" y="493.5" width="10" height="41.7" fill="#ff0000" stroke="#333" stroke-width="1"/>
<rect x="310.9" y="494.7" width="10" height="40.5" fill="#ff0000" stroke="#333" stroke-width="1"/>
<rect x="330.8" y="494.0" width="10" height="41.2" fill="#ff0000" stroke="#333" stroke-width="1"/>
<rect x="350.6" y="494.7" width="10" height="40.5" fill="#ff0000" stroke="#333" stroke-width="1"/>
<rect x="370.5" y="495.7" width="10" height="39.5" fill="#ff0000" stroke="#333" stroke-width="1"/>
<rect x="390.4" y="497.6" width="10" height="37.6" fill="#ff0000" stroke="#333" stroke-width="1"/>
<rect x="410.3" y="498.6" width="10" height="36.6" fill="#ff7e00" stroke="#333" stroke-width="1"/>
<rect x="430.1" y="486.5" width="10" height="48.7" fill="#ff0000" stroke="#333" stroke-width="1"/>
<rect x="450.0" y="471.9" width="10" height="63.3" fill="#99004c" stroke="#333" stroke-width="1"/>
<rect x="469.9" y="443.3" width="10" height="91.9" fill="#4c0026" stroke="#333" stroke-width="1"/>
<rect x="489.8" y="473.9" width="10" height="61.3" fill="#99004c" stroke="#333" stroke-width="1"/>
<rect x="509.6" y="482.6" width="10" height="52.6" fill="#99004c" stroke="#333" stroke-width="1"/>
<rect x="529.5" y="477.3" width="10" height="57.9" fill="#99004c" stroke="#333" stroke-width="1"/>
<rect x="67" y="535" width="478" height="1" fill="#ccd6eb"/>
<rect x="67.0" y="535" width="1" height="6.5" fill="#ccd6eb"/>
<rect x="86.9" y="535" width="1" height="6.5" fill="#ccd6eb"/>
<rect x="106.8" y="535" width="1" height="6.5" fill="#ccd6eb"/>
<rect x="126.6" y="535" width="1" height="6.5" fill="#ccd6eb"/>
<rect x="146.5" y="535" width="1" height="6.5" fill="#ccd6eb"/>
<rect x="166.4" y="535" width="1" height="6.5" fill="#ccd6eb"/>
<rect x="186.2" y="535" width="1" height="6.5" fill="#ccd6eb"/>
<rect x="206.1" y="535" width="1" height="6.5" fill="#ccd6eb"/>
<rect x="226.0" y="535" width="1" height="6.5" fill="#ccd6eb"/>
<rect x="245.9" y="535" width="1" height="6.5" fill="#ccd6eb"/>
<rect x="265.8" y="535" width="1" height="6.5" fill="#ccd6eb"/>
<rect x="285.6" y="535" width="1" height="6.5" fill="#ccd6eb"/>
<rect x="305.5" y="535" width="1" height="6.5" fill="#ccd6eb"/>
<rect x="325.4" y="535" width="1" height="6.5" fill="#ccd6eb"/>
<rect x="345.2" y="535" width="1" height="6.5" fill="#ccd6eb"/>
<rect x="365.1" y="535" width="1" height="6.5" fill="#ccd6eb"/>
<rect x="385.0" y="535" width="1" height="6.5" fill="#ccd6eb"/>
<rect x="404.9" y="535" width="1" height="6.5" fill="#ccd6eb"/>
<rect x="424.8" y="535" width="1" height="6.5" fill="#ccd6eb"/>
<rect x="444.6" y="535" width="1" height="6.5" fill="#ccd6eb"/>
<rect x="464.5" y="535" width="1" height="6.5" fill="#ccd6eb"/>
<rect x="484.4" y="535" width="1" height="6.5" fill="#ccd6eb"/>
<rect x="504.2" y="535" width="1" height="6.5" fill="#ccd6eb"/>
<rect x="524.1" y="535" width="1" height="6.5" fill="#ccd6eb"/>
<rect x="544.0" y="535" width="1" height="6.5" fill="#ccd6eb"/>
<text transform="translate(78.6,545.2) rotate(-45)" font-size="7.9" fill="#666" text-anchor="end">8 PM</text>
<text transform="translate(98.5,545.2) rotate(-45)" font-size="7.9" fill="#666" text-anchor="end">9 PM</text>
<text transform="translate(118.4,545.2) rotate(-45)" font-size="7.9" fill="#666" text-anchor="end">10 PM</text>
<text transform="translate(138.3,545.2) rotate(-45)" font-size="7.9" fill="#666" text-anchor="end">11 PM</text>
<text transform="translate(158.1,545.2) rotate(-45)" font-size="7.9" fill="#666" text-anchor="end">2020 12 AM</text>
<text transform="translate(178.0,545.2) rotate(-45)" font-size="7.9" fill="#666" text-anchor="end">1 AM</text>
<text transform="translate(197.9,545.2) rotate(-45)" font-size="7.9" fill="#666" text-anchor="end">2 AM</text>
<text transform="translate(217.8,545.2) rotate(-45)" font-size="7.9" fill="#666" text-anchor="end">3 AM</text>
<text transform="translate(237.6,545.2) rotate(-45)" font-size="7.9" fill="#666" text-anchor="end">4 AM</text>
<text transform="translate(257.5,545.2) rotate(-45)" font-size="7.9" fill="#666" text-anchor="end">5 AM</text>
<text transform="translate(277.4,545.2) rotate(-45)" font-size="7.9" fill="#666" text-anchor="end">6 AM</text>
<text transform="translate(297.3,545.2) rotate(-45)" font-size="7.9" fill="#666" text-anchor="end">7 AM</text>
<text transform="translate(317.1,545.2) rotate(-45)" font-size="7.9" fill="#666" text-anchor="end">8 AM</text>
<text transform="translate(337.0,545.2) rotate(-45)" font-size="7.9" fill="#666" text-anchor="end">9 AM</text>
<text transform="translate(356.9,545.2) rotate(-45)" font-size="7.9" fill="#666" text-anchor="end">10 AM</text>
<text transform="translate(376.8,545.2) rotate(-45)" font-size="7.9" fill="#666" text-anchor="end">11 AM</text>
<text transform="translate(396.6,545.2) rotate(-45)" font-size="7.9" fill="#666" text-anchor="end">12 PM</text>
<text transform="translate(416.5,545.2) rotate(-45)" font-size="7.9" fill="#666" text-anchor="end">1 PM</text>
<text transform="translate(436.4,545.2) rotate(-45)" font-size="7.9" fill="#666" text-anchor="end">2 PM</text>
<text transform="translate(456.3,545.2) rotate(-45)" font-size="7.9" fill="#666" text-anchor="end">3 PM</text>
<text transform="translate(476.1,545.2) rotate(-45)" font-size="7.9" fill="#666" text-anchor="end">4 PM</text>
<text transform="translate(496.0,545.2) rotate(-45)" font-size="7.9" fill="#666" text-anchor="end">5 PM</text>
<text transform="translate(515.9,545.2) rotate(-45)" font-size="7.9" fill="#666" text-anchor="end">6 PM</text>
<text transform="translate(535.8,545.2) rotate(-45)" font-size="7.9" fill="#666" text-anchor="end">7 PM</text>
</svg>
<!--/CHART-->

<!-- current conditions -->
<div class="abs" style="left:562px;top:373px;width:168px;height:195px;border:1px solid #034783;background:#eeeeee">
  <div style="height:50px;background:#034783;color:#fff;font-weight:bold;text-align:center;font-size:10px">
    <div style="padding-top:4px;line-height:13px">Current Conditions</div>
    <div style="font-size:7.8px;line-height:14.5px;position:relative;top:1px">observed at</div>
    <div style="line-height:13px">Dec 24, 2020 7:00 PM (LT)</div>
  </div>
  <div style="height:77px;background:#99004c;color:#fff;font-weight:bold;text-align:center;font-size:13.3px;line-height:19.3px;padding-top:9px">239 AQI<br>Very Unhealthy<br>PM2.5</div>
  <div style="text-align:center;font-weight:bold;font-size:7.9px;color:#222;padding-top:6px">Health Message</div>
  <div style="font-size:8px;color:#555;line-height:13.8px;padding-left:3px;padding-top:5px">AQI values between 201 and 300 trigger a<br>health alert, meaning everyone may<br>experience more serious health effects.</div>
</div>
</body></html>
